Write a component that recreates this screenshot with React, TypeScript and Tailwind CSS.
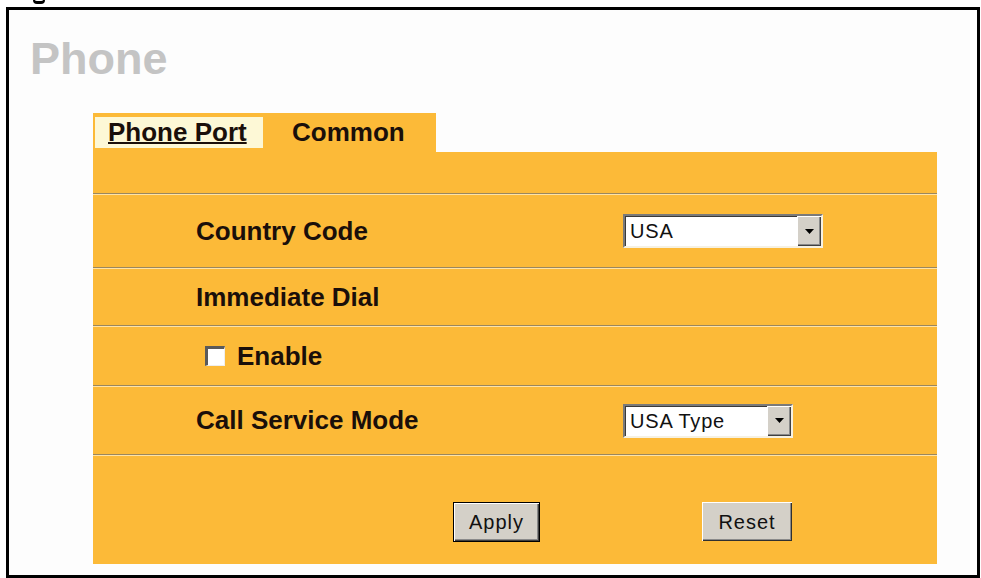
const Line = () => (
  <div className="h-[2px] w-full border-t border-[#9a875e] border-b border-b-[#ffe3a6]" />
);

const Arrow = () => (
  <svg width="9" height="5" viewBox="0 0 9 5">
    <polygon points="0,0 9,0 4.5,5" fill="#000" />
  </svg>
);

const Select = ({ value, width }: { value: string; width: string }) => (
  <div
    className={`${width} h-[34px] flex items-stretch bg-white border-2 border-t-[#7a7a7a] border-l-[#7a7a7a] border-b-[#f6f1e2] border-r-[#f6f1e2] shadow-[inset_1px_1px_0_#3a3a3a]`}
  >
    <span className="flex-1 flex items-center pl-[5px] text-[20px] tracking-[0.8px] text-[#111]">
      {value}
    </span>
    <span className="w-[24px] flex items-center justify-center bg-[#d4d0c8] shadow-[inset_1px_1px_0_#ffffff,inset_-1px_-1px_0_#404040,inset_-2px_-2px_0_#8a8a8a]">
      <Arrow />
    </span>
  </div>
);

const Label = ({ children }: { children: React.ReactNode }) => (
  <span className="w-[427px] text-[26px] font-bold text-[#1a0f0a]">{children}</span>
);

export default function App() {
  return (
    <div className="w-[981px] h-[578px] bg-white overflow-hidden font-['Liberation_Sans',Arial,sans-serif]">
      {/* bottom of the caption glyph that is cut off above the frame */}
      <div className="h-[7px] pl-[33px]">
        <div className="w-[12px] h-[4px] border-b-[3px] border-x-[2px] border-black rounded-b-full" />
      </div>

      <div className="ml-[6px] w-[974px] h-[571px] border-[3px] border-black bg-[#fdfdfd]">
        <h1 className="mt-[26px] pl-[21px] text-[45px] leading-[45px] font-bold text-[#c4c4c4]">
          Phone
        </h1>

        <div className="mt-[32px] ml-[84px] w-[844px]">
          {/* tabs */}
          <div className="w-[343px] h-[39px] bg-[#fcba38] flex items-start">
            <div className="mt-[4px] ml-[2px] h-[31px] w-[168px] bg-[#fdf8d6] pl-[13px] text-[26px] leading-[31px] font-bold text-[#1a0f0a] underline decoration-2">
              Phone Port
            </div>
            <div className="mt-[4px] ml-[29px] h-[31px] text-[26px] leading-[31px] font-bold text-[#1a0f0a]">
              Common
            </div>
          </div>

          {/* body */}
          <div className="bg-[#fcba38]">
            <div className="h-[41px]" />
            <Line />
            <div className="h-[72px] flex items-center pl-[103px]">
              <Label>Country Code</Label>
              <Select value="USA" width="w-[200px]" />
            </div>
            <Line />
            <div className="h-[56px] flex items-center pl-[103px]">
              <Label>Immediate Dial</Label>
            </div>
            <Line />
            <div className="h-[58px] flex items-center pl-[112px] gap-[12px]">
              <span className="w-[20px] h-[20px] bg-white border-t-[3px] border-l-[3px] border-[#5a5a5a] border-b border-r border-b-[#eeeeee] border-r-[#eeeeee]" />
              <span className="text-[26px] font-bold text-[#1a0f0a]">Enable</span>
            </div>
            <Line />
            <div className="h-[67px] flex items-center pl-[103px]">
              <Label>Call Service Mode</Label>
              <Select value="USA Type" width="w-[170px]" />
            </div>
            <Line />
            <div className="h-[108px] pt-[46px] flex items-start pl-[360px]">
              <button className="w-[87px] h-[40px] bg-[#d4d0c8] border border-black shadow-[inset_1px_1px_0_#ffffff,inset_-1px_-1px_0_#404040,inset_-2px_-2px_0_#8a8a8a] text-[20px] tracking-[1px] text-[#111]">
                Apply
              </button>
              <button className="ml-[162px] w-[90px] h-[39px] bg-[#d4d0c8] shadow-[inset_1px_1px_0_#ffffff,inset_-1px_-1px_0_#303030,inset_-2px_-2px_0_#8a8a8a] text-[20px] tracking-[1px] text-[#111]">
                Reset
              </button>
            </div>
          </div>
        </div>
      </div>
    </div>
  );
}
